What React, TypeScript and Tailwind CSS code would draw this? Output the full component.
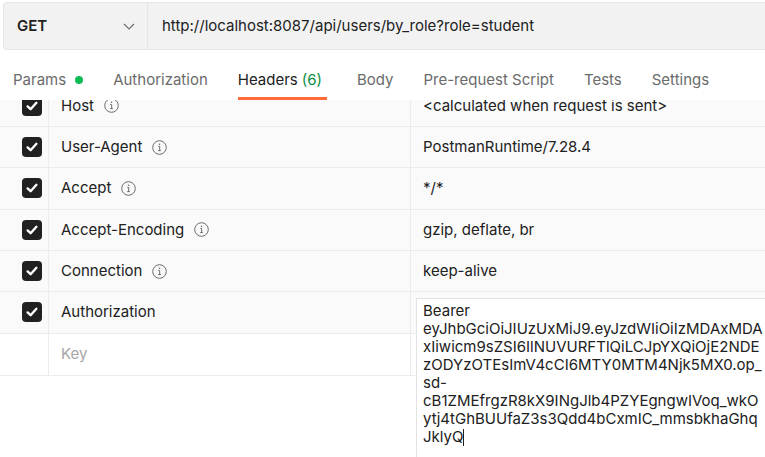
import React from 'react';

const CheckBox: React.FC = () => (
    <div className="w-[20px] h-[20px] rounded-[4px] bg-[#212121] flex items-center justify-center">
        <svg width="14" height="14" viewBox="0 0 14 14" fill="none">
            <path d="M2.6 7.4 L5.6 10.2 L11.4 3.8" stroke="#ffffff" strokeWidth="2.4" strokeLinecap="round" strokeLinejoin="round" />
        </svg>
    </div>
);

const InfoIcon: React.FC = () => (
    <svg width="15" height="15" viewBox="0 0 15 15" fill="none" className="ml-[10px] shrink-0">
        <circle cx="7.5" cy="7.5" r="6.8" stroke="#6b6b6b" strokeWidth="1" />
        <circle cx="7.5" cy="4.3" r="0.8" fill="#6b6b6b" />
        <path d="M6.3 6.4 H7.7 V10.6 M6.2 10.6 H8.9" stroke="#6b6b6b" strokeWidth="1" />
    </svg>
);

type Row = { key: string; value: string; info: boolean };

const rows: Row[] = [
    { key: 'Host', value: '<calculated when request is sent>', info: true },
    { key: 'User-Agent', value: 'PostmanRuntime/7.28.4', info: true },
    { key: 'Accept', value: '*/*', info: true },
    { key: 'Accept-Encoding', value: 'gzip, deflate, br', info: true },
    { key: 'Connection', value: 'keep-alive', info: true },
];

const tokenLines = [
    'Bearer',
    'eyJhbGciOiJIUzUxMiJ9.eyJzdWIiOiIzMDAxMDA',
    'xIiwicm9sZSI6IlNUVURFTlQiLCJpYXQiOjE2NDE',
    'zODYzOTEsImV4cCI6MTY0MTM4Njk5MX0.op_',
    'sd-',
    'cB1ZMEfrgzR8kX9INgJlb4PZYEgngwIVoq_wkO',
    'ytj4tGhBUUfaZ3s3Qdd4bCxmIC_mmsbkhaGhq',
];

const tabs = ['Params', 'Authorization', 'Headers', 'Body', 'Pre-request Script', 'Tests', 'Settings'];

const App: React.FC = () => {
    return (
        <div className="w-[765px] h-[457px] overflow-hidden bg-white text-[15px] text-[#212121] font-['Inter','Liberation_Sans',sans-serif]">
            {/* request bar */}
            <div className="pt-[2px] pl-[3px]">
                <div className="h-[48px] flex bg-[#f2f2f2] border border-r-0 border-[#e6e6e6] rounded-l-[4px]">
                    <div className="w-[144px] shrink-0 flex items-center pl-[13px] pr-[12px] border-r border-[#e6e6e6]">
                        <span className="font-semibold text-[#212121]">GET</span>
                        <svg width="12" height="7" viewBox="0 0 12 7" fill="none" className="ml-auto">
                            <path d="M1 1 L6 6 L11 1" stroke="#6b6b6b" strokeWidth="1.1" />
                        </svg>
                    </div>
                    <div className="flex items-center pl-[14px] whitespace-nowrap">
                        http://localhost:8087/api/users/by_role?role=student
                    </div>
                </div>
            </div>

            {/* tabs */}
            <div className="h-[50px] flex items-end pl-[13px] gap-[30px]">
                {tabs.map(t => (
                    <div
                        key={t}
                        className={`flex items-center leading-[20px] pb-[7px] border-b-[3px] whitespace-nowrap ${
                            t === 'Headers' ? 'border-[#ff6c37] text-[#212121] pr-[5px]' : 'border-transparent text-[#6b6b6b]'
                        }`}
                    >
                        {t}
                        {t === 'Params' && <span className="ml-[9px] w-[8px] h-[8px] rounded-full bg-[#0cbb52]" />}
                        {t === 'Headers' && <span className="ml-[4px] text-[#0a8f3f]">(6)</span>}
                    </div>
                ))}
            </div>

            {/* headers table, scrolled */}
            <div className="h-[357px] overflow-hidden">
                <div className="-mt-[14.33px]">
                    {rows.map(r => (
                        <div key={r.key} className="h-[41.33px] flex bg-[#fafafa] border-b border-[#ececec]">
                            <div className="w-[49px] shrink-0 flex items-center pl-[22px] border-r border-[#ececec]">
                                <CheckBox />
                            </div>
                            <div className="w-[362px] shrink-0 flex items-center pl-[12px] border-r border-[#ececec]">
                                {r.key}
                                {r.info && <InfoIcon />}
                            </div>
                            <div className="flex-1 flex items-center pl-[12px] whitespace-nowrap">{r.value}</div>
                        </div>
                    ))}
                    <div className="h-[41.33px] flex bg-[#fafafa] border-b border-[#ececec]">
                        <div className="w-[49px] shrink-0 flex items-center pl-[22px] border-r border-[#ececec]">
                            <CheckBox />
                        </div>
                        <div className="w-[362px] shrink-0 flex items-center pl-[12px] border-r border-[#ececec]">
                            Authorization
                        </div>
                        <div className="flex-1 relative">
                            <div className="absolute left-[5px] top-[6px] w-[420px] h-[200px] bg-white border border-[#e3e3e3] pl-[6px] pt-[3px] leading-[18px] z-10">
                                {tokenLines.map(l => (
                                    <div key={l} className="whitespace-nowrap">{l}</div>
                                ))}
                                <div className="whitespace-nowrap flex items-center">
                                    JklyQ
                                    <span className="w-[1px] h-[17px] bg-[#212121]" />
                                </div>
                            </div>
                        </div>
                    </div>
                    <div className="h-[42px] flex bg-white border-b border-[#ececec] w-[416px]">
                        <div className="w-[49px] shrink-0 border-r border-[#ececec]" />
                        <div className="w-[362px] shrink-0 flex items-center pl-[12px] border-r border-[#ececec] text-[#a6a6a6]">
                            Key
                        </div>
                    </div>
                </div>
            </div>
        </div>
    );
};

export default App;
